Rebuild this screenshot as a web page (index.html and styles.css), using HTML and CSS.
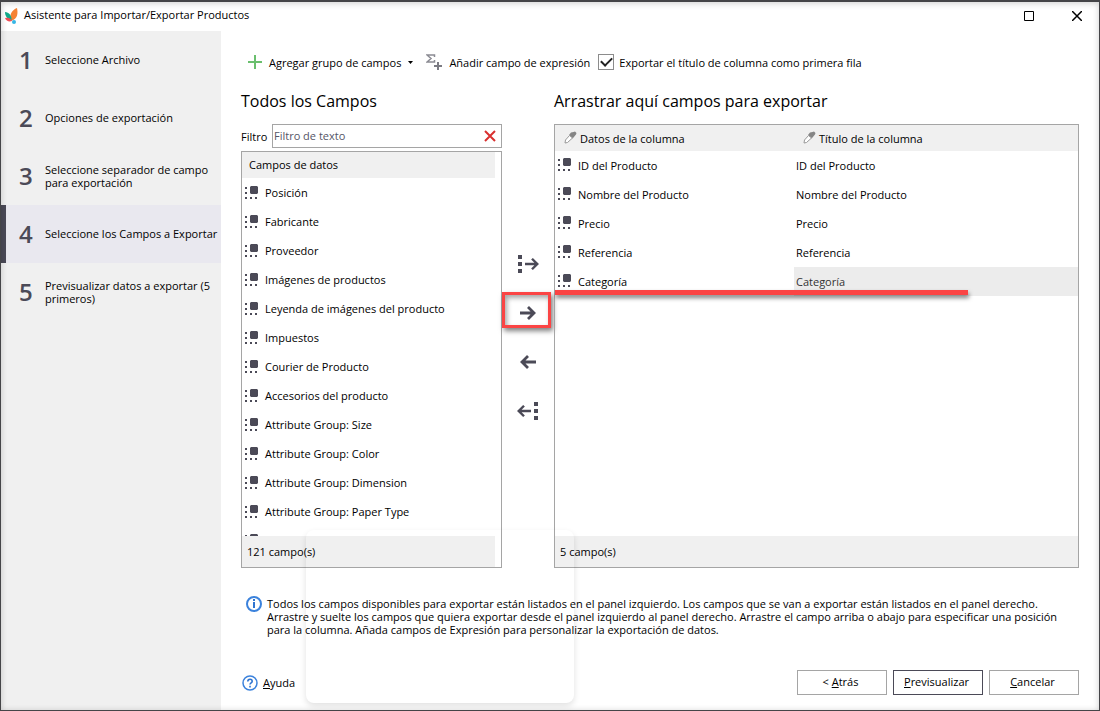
FILE: index.html
```html
<!DOCTYPE html>
<html lang="es">
<head>
  <meta charset="UTF-8">
  <title>Asistente para Importar/Exportar Productos</title>
  <link rel="stylesheet" href="styles.css">
</head>
<body>

<svg class="sprite" width="0" height="0">
  <symbol id="field" viewBox="0 0 14 14">
    <path fill="#4b4a57" d="M6 0h6l1 1v6l-1 1H6L5 7V1zM0 1h2v2H0zM0 6h2v2H0zM0 11h2v2H0zM5 11h2v2H5zM10 11h2v2h-2z"/>
  </symbol>
  <symbol id="pencil" viewBox="0 0 14 14">
    <path fill="#858585" d="M6 4l2-2.500L10.500 1l1.500-.5L13.500 2 13 3.500 10.500 6.500 9.500 7.500z"/>
    <path fill="#fff" stroke="#999" d="M6.500 4.500l3 2.500-5 4.500-2.500.5.500-3z"/>
  </symbol>
  <symbol id="arrow" viewBox="0 0 16 16">
    <path fill="none" stroke="#4b4a57" stroke-width="2.800" d="M0 8h14M8 2l6 6-6 6"/>
  </symbol>
</svg>

<div class="window">
  <header class="titlebar">
    <svg class="logo" width="14" height="16" viewBox="0 0 14 16">
      <path fill="#f58233" d="M12 0C7 2 4 6 6 13c7-2 7-8 6-13z"/>
      <path fill="#12a98a" d="M0 4c4 0 7 4 6.500 8.500C2 11 0 8 0 4z"/>
      <path fill="#ef4d56" d="M0 10c4-1 6 1 7 3-3 1-6 0-7-3z"/>
      <circle fill="#35b6e6" cx="9" cy="14" r="2"/>
    </svg>
    <h1>Asistente para Importar/Exportar Productos</h1>
    <button class="win-btn" aria-label="Maximizar">
      <svg width="10" height="10"><path fill="none" stroke="#000" d="M.5.5h9v9h-9z"/></svg>
    </button>
    <button class="win-btn" aria-label="Cerrar">
      <svg width="10" height="10"><path stroke="#000" stroke-width="1.500" d="M0 0l10 10M10 0L0 10"/></svg>
    </button>
  </header>

  <div class="content">
    <ol class="steps">
      <li><span class="num">1</span><span>Seleccione Archivo</span></li>
      <li><span class="num">2</span><span>Opciones de exportación</span></li>
      <li><span class="num">3</span><span>Seleccione separador de campo para exportación</span></li>
      <li class="active"><span class="num">4</span><span>Seleccione los Campos a Exportar</span></li>
      <li><span class="num">5</span><span>Previsualizar datos a exportar (5 primeros)</span></li>
    </ol>

    <main>
      <div class="toolbar">
        <button class="tool add-group">
          <svg width="14" height="14"><path stroke="#6abf6e" stroke-width="2" d="M7 0v14M0 7h14"/></svg>
          <span>Agregar grupo de campos</span>
          <svg width="5" height="3"><path d="M0 0h5L2.500 3z"/></svg>
        </button>
        <button class="tool add-expr">
          <svg width="16" height="16" viewBox="0 0 16 16">
            <path fill="none" stroke="#8b8b93" stroke-width="1.500" d="M8.500 3V1H1l4 3.500L1 8h7.500V6"/>
            <path stroke="#7b7b83" stroke-width="2" d="M12 8v8M8 12h8"/>
          </svg>
          <span>Añadir campo de expresión</span>
        </button>
        <input type="checkbox" id="firstRow" checked>
        <label for="firstRow">Exportar el título de columna como primera fila</label>
      </div>

      <div class="panels">
        <section class="source">
          <h2>Todos los Campos</h2>
          <div class="filter">
            <label for="filter">Filtro</label>
            <div class="filter-box">
              <input type="text" id="filter" placeholder="Filtro de texto">
              <button class="clear" aria-label="Borrar filtro">
                <svg width="12" height="12"><path stroke="#d9302f" stroke-width="2" d="M1 1l10 10M11 1L1 11"/></svg>
              </button>
            </div>
          </div>
          <div class="panel inset">
            <h3>Campos de datos</h3>
            <ul class="fields">
              <li><svg class="icon"><use href="#field"/></svg>Posición</li>
              <li><svg class="icon"><use href="#field"/></svg>Fabricante</li>
              <li><svg class="icon"><use href="#field"/></svg>Proveedor</li>
              <li><svg class="icon"><use href="#field"/></svg>Imágenes de productos</li>
              <li><svg class="icon"><use href="#field"/></svg>Leyenda de imágenes del producto</li>
              <li><svg class="icon"><use href="#field"/></svg>Impuestos</li>
              <li><svg class="icon"><use href="#field"/></svg>Courier de Producto</li>
              <li><svg class="icon"><use href="#field"/></svg>Accesorios del producto</li>
              <li><svg class="icon"><use href="#field"/></svg>Attribute Group: Size</li>
              <li><svg class="icon"><use href="#field"/></svg>Attribute Group: Color</li>
              <li><svg class="icon"><use href="#field"/></svg>Attribute Group: Dimension</li>
              <li><svg class="icon"><use href="#field"/></svg>Attribute Group: Paper Type</li>
              <li><svg class="icon"><use href="#field"/></svg></li>
            </ul>
            <div class="count">121 campo(s)</div>
          </div>
        </section>

        <div class="movers">
          <button aria-label="Añadir todos">
            <svg width="22" height="18"><path fill="#4b4a57" d="M1 0h4v4H1zM1 7h4v4H1zM1 14h4v4H1z"/><use href="#arrow" x="8" y="2" width="14" height="14"/></svg>
          </button>
          <button class="marked" aria-label="Añadir">
            <svg width="16" height="16"><use href="#arrow" width="16" height="16"/></svg>
          </button>
          <button class="back" aria-label="Quitar">
            <svg width="16" height="16"><use href="#arrow" width="16" height="16"/></svg>
          </button>
          <button class="back" aria-label="Quitar todos">
            <svg width="22" height="18"><path fill="#4b4a57" d="M1 0h4v4H1zM1 7h4v4H1zM1 14h4v4H1z"/><use href="#arrow" x="8" y="2" width="14" height="14"/></svg>
          </button>
        </div>

        <section class="target">
          <h2>Arrastrar aquí campos para exportar</h2>
          <div class="panel">
            <table>
              <thead>
                <tr>
                  <th><svg class="icon"><use href="#pencil"/></svg>Datos de la columna</th>
                  <th><svg class="icon"><use href="#pencil"/></svg>Título de la columna</th>
                </tr>
              </thead>
              <tbody>
                <tr><td><svg class="icon"><use href="#field"/></svg>ID del Producto</td><td>ID del Producto</td></tr>
                <tr><td><svg class="icon"><use href="#field"/></svg>Nombre del Producto</td><td>Nombre del Producto</td></tr>
                <tr><td><svg class="icon"><use href="#field"/></svg>Precio</td><td>Precio</td></tr>
                <tr><td><svg class="icon"><use href="#field"/></svg>Referencia</td><td>Referencia</td></tr>
                <tr><td><svg class="icon"><use href="#field"/></svg>Categoría</td><td class="selected">Categoría</td></tr>
              </tbody>
            </table>
            <div class="underline"></div>
            <div class="count">5 campo(s)</div>
          </div>
        </section>
      </div>

      <div class="info">
        <svg width="16" height="16" viewBox="0 0 16 16">
          <circle cx="8" cy="8" r="7" fill="#fff" stroke="#3b82dc" stroke-width="2"/>
          <path fill="#2f74d0" d="M7 3h2v2H7zM7 6h2v6H7z"/>
        </svg>
        <p>Todos los campos disponibles para exportar están listados en el panel izquierdo. Los campos que se van a exportar están listados en el panel derecho.<br>
        Arrastre y suelte los campos que quiera exportar desde el panel izquierdo al panel derecho. Arrastre el campo arriba o abajo para especificar una posición<br>
        para la columna. Añada campos de Expresión para personalizar la exportación de datos.</p>
      </div>

      <footer>
        <a href="#" class="help">
          <svg width="16" height="16" viewBox="0 0 16 16">
            <circle cx="8" cy="8" r="7" fill="#fff" stroke="#3b82dc" stroke-width="1.500"/>
            <path fill="none" stroke="#2f74d0" stroke-width="1.600" d="M5.800 6.500C5.800 3.500 10.200 3.500 10.200 6.200C10.200 7.800 8 7.800 8 9.600M8 10.800v1.700"/>
          </svg>
          <span><u>A</u>yuda</span>
        </a>
        <button class="btn">&lt; <u>A</u>trás</button>
        <button class="btn default"><u>P</u>revisualizar</button>
        <button class="btn"><u>C</u>ancelar</button>
      </footer>

      <div class="ghost"></div>
    </main>
  </div>
</div>

</body>
</html>
```
FILE: styles.css
```css
* {
  box-sizing: border-box;
}

body {
  margin: 0;
  font-family: 'Open Sans', 'Noto Sans', sans-serif;
  font-size: 11px;
  line-height: 13px;
  color: #000;
  background: #fff;
}

h1, h2, h3, p, ul, ol {
  margin: 0;
  padding: 0;
  font-weight: normal;
  list-style: none;
}

button {
  padding: 0;
  border: none;
  background: none;
  font: inherit;
  color: inherit;
}

svg {
  display: block;
  flex: none;
}

.sprite {
  position: absolute;
}

.window {
  position: relative;
  display: flex;
  flex-direction: column;
  min-height: 100vh;
  border: 1px solid #454548;
  border-top-width: 2px;
}

/* soft edge inside the window frame */
.window::after {
  content: '';
  position: absolute;
  inset: 0;
  box-shadow: inset 0 1px 6px rgba(0, 0, 0, 0.2);
  pointer-events: none;
}

.titlebar {
  display: flex;
  align-items: center;
  height: 29px;
  padding: 0 3px 2px 4px;
}

.titlebar h1 {
  flex: 1;
  margin-left: 5px;
  padding-bottom: 1px;
  font-size: 11px;
  line-height: 16px;
}

.win-btn {
  display: flex;
  justify-content: center;
  width: 48px;
}

.win-btn:last-child {
  width: 38px;
  margin-left: 5px;
}

.content {
  flex: 1;
  display: flex;
}

.steps {
  width: 220px;
  background: #f0f0f0;
}

.steps li {
  display: flex;
  align-items: center;
  height: 58px;
  padding: 0 0 1px 13px;
  border-left: 5px solid transparent;
}

.steps .active {
  background: #e9e8ef;
  border-color: #4b4a57;
}

.num {
  flex: none;
  width: 26px;
  font-size: 24px;
  line-height: 24px;
  font-weight: 600;
  color: #4b4a57;
}

main {
  position: relative;
  flex: 1;
  display: flex;
  flex-direction: column;
  padding: 20px 20px 15px;
}

.toolbar {
  display: flex;
  align-items: center;
  height: 22px;
  padding-left: 7px;
}

.toolbar label {
  margin-left: 5px;
}

.tool {
  display: flex;
  align-items: center;
  gap: 7px;
  white-space: nowrap;
}

.add-expr {
  margin: 0 8px 0 13px;
}

input[type="checkbox"] {
  appearance: none;
  width: 16px;
  height: 16px;
  margin: 0;
  border: 1px solid #8c8c8c;
  display: grid;
  place-items: center;
}

input[type="checkbox"]:checked::before {
  content: '';
  width: 9px;
  height: 5px;
  margin-top: -3px;
  border: solid #222;
  border-width: 0 0 2px 2px;
  transform: rotate(-45deg);
}

.panels {
  flex: 1;
  display: grid;
  grid-template-columns: 261px 52px 1fr;
  margin-top: 17px;
}

.source, .target {
  display: flex;
  flex-direction: column;
}

h2 {
  height: 34px;
  font-size: 16px;
  line-height: 22px;
}

.filter {
  display: flex;
  align-items: center;
  justify-content: space-between;
  margin-bottom: 3px;
}

.filter-box {
  display: flex;
  align-items: center;
  width: 230px;
  height: 24px;
  border: 1px solid #a5a5a5;
}

.filter-box input {
  flex: 1;
  min-width: 0;
  padding: 0 1px 2px;
  border: none;
  outline: none;
  font: inherit;
}

.filter-box input::placeholder {
  color: #555566;
}

.clear {
  padding-right: 5px;
}

.panel {
  position: relative;
  flex: 1;
  display: flex;
  flex-direction: column;
  border: 1px solid #a5a5a5;
}

.inset {
  padding-right: 6px;
}

h3 {
  height: 26px;
  padding-left: 7px;
  font-size: 11px;
  line-height: 26px;
  background: #f0f0f0;
}

.fields {
  flex: 1 0 358px;
  height: 358px;
  overflow: hidden;
}

.fields li {
  display: flex;
  align-items: center;
  height: 29px;
  padding-left: 3px;
}

.icon {
  width: 14px;
  height: 14px;
}

.fields .icon {
  margin-right: 6px;
}

.count {
  height: 31px;
  margin-top: auto;
  padding-left: 5px;
  line-height: 31px;
  background: #f0f0f0;
}

.movers {
  display: flex;
  flex-direction: column;
  padding-top: 156px;
  gap: 13px;
}

.movers button {
  position: relative;
  display: grid;
  place-items: center;
  height: 36px;
}

.back svg {
  transform: scaleX(-1);
}

.marked::after {
  content: '';
  position: absolute;
  inset: -3px 3px 3px 0;
  border: 3px solid #fb4444;
  box-shadow: 2px 3px 5px rgba(0, 0, 0, 0.5), inset 2px 3px 5px rgba(0, 0, 0, 0.35);
}

table {
  width: 100%;
  border-collapse: collapse;
  line-height: 15px;
}

th, td {
  height: 29px;
  padding: 0 2px;
  text-align: left;
  font-weight: normal;
}

td:first-child {
  padding-left: 3px;
}

th {
  height: 26px;
  padding-left: 8px;
  background: #f0f0f0;
}

th:first-child {
  width: 239px;
}

td .icon, th .icon {
  display: inline-block;
  margin-right: 6px;
  vertical-align: top;
}

th .icon {
  margin-right: 3px;
}

.selected {
  background: #ececec;
  color: #333;
}

.underline {
  position: absolute;
  top: 165px;
  left: 0;
  width: 79%;
  height: 5px;
  background: #fb4444;
  box-shadow: 1px 3px 4px rgba(0, 0, 0, 0.5);
}

.info {
  display: flex;
  align-items: flex-start;
  gap: 5px;
  padding: 28px 0 0 5px;
}

.info p {
  padding: 1px 0;
  white-space: nowrap;
}

footer {
  display: flex;
  align-items: center;
  gap: 6px;
  margin-top: 33px;
}

.help {
  display: flex;
  align-items: center;
  gap: 5px;
  margin: 0 auto 0 1px;
  color: #000;
  text-decoration: none;
}

.btn {
  width: 90px;
  height: 25px;
  padding: 0 3px 2px 0;
  border: 1px solid #a5a5a5;
  background: #fff;
}

.default {
  border-color: #4b4a57;
}

.ghost {
  position: absolute;
  left: 85px;
  bottom: 7px;
  width: 268px;
  height: 173px;
  border-radius: 8px;
  box-shadow: 0 3px 6px rgba(0, 0, 0, 0.12);
  pointer-events: none;
}
```
